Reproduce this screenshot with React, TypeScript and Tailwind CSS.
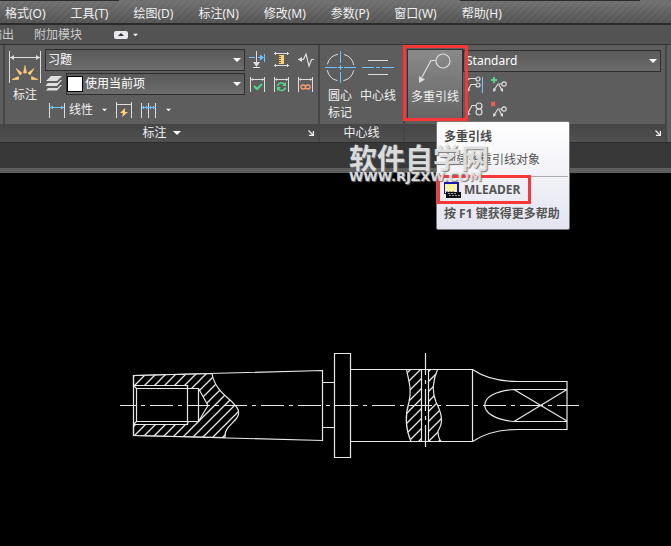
import React from 'react';
import { clsx } from 'clsx';

const MENUS = ['格式(O)', '工具(T)', '绘图(D)', '标注(N)', '修改(M)', '参数(P)', '窗口(W)', '帮助(H)'];

const Caret = ({ className }: { className?: string }) => (
  <svg width="8" height="4" viewBox="0 0 8 4" className={clsx('shrink-0 fill-white', className)} aria-hidden="true">
    <path d="M0 0h8L4 4z" />
  </svg>
);

const Launcher = () => (
  <button aria-label="展开" className="ml-auto">
    <svg width="6" height="6" viewBox="0 0 6 6" fill="none" stroke="#eee" strokeWidth="1.2">
      <path d="M.5.5 5 5M5.4 1v4.4H1" />
    </svg>
  </button>
);

const DimBox = ({ children }: { children: React.ReactNode }) => (
  <svg width="17" height="17" viewBox="0 0 17 17" fill="none">
    <path d="M1.5 1v15M15.5 1v15M2 3.5h13" stroke="#ddd" />
    <path d="M2 3.5l2-1.5v3zM15 3.5l-2-1.5v3z" fill="#ddd" />
    {children}
  </svg>
);

const SmallTools = () => (
  <div className="grid grid-cols-3 gap-x-[7px] gap-y-2">
    <button aria-label="标注打断">
      <svg width="17" height="17" viewBox="0 0 17 17" fill="none">
        <path d="M7.5 0v13M4 16.5h7" stroke="#ddd" />
        <path d="M4 11h7l-3.5 5z" fill="#ddd" />
        <path d="M0 6.5h6M9 6.5h4M15.5 3v8" stroke="#6cc5ff" />
        <path d="M11 3.5l4 3-4 3z" fill="#6cc5ff" />
      </svg>
    </button>
    <button aria-label="调整间距">
      <svg width="17" height="17" viewBox="0 0 17 17" fill="none">
        <path d="M1 2.5h15M1 14.5h15M2.5 1v3M14.5 1v3M2.5 13v3M14.5 13v3" stroke="#ddd" />
        <path d="M6 4h5v9H6z" fill="#ffd27a" />
        <path d="M6 5.5h2M6 7.5h2M6 9.5h2M6 11.5h2" stroke="#6b5a36" />
      </svg>
    </button>
    <button aria-label="折弯标注">
      <svg width="17" height="17" viewBox="0 0 17 17" fill="none">
        <path d="M1 8.500h5.500L9 3l3 12 2.500-6.500H17" stroke="#ddd" strokeWidth="1.200" />
        <path d="M1 8.500 5 6v5z" fill="#ddd" />
      </svg>
    </button>
    <button aria-label="检验">
      <DimBox><path d="m5 10 3 3 5-5" stroke="#57d68a" strokeWidth="2" /></DimBox>
    </button>
    <button aria-label="更新">
      <DimBox>
        <path d="M4.500 10a4 4 0 0 1 7-1.500M12.500 11.500a4 4 0 0 1-7 1.500" stroke="#57d68a" strokeWidth="1.600" />
        <path d="M13 6v4H9zM4 15v-4h4z" fill="#57d68a" />
      </DimBox>
    </button>
    <button aria-label="重新关联">
      <DimBox>
        <ellipse cx="6.200" cy="11" rx="2.300" ry="2" stroke="#ff9b6e" strokeWidth="1.300" />
        <ellipse cx="10.800" cy="11" rx="2.300" ry="2" stroke="#ff9b6e" strokeWidth="1.300" />
      </DimBox>
    </button>
  </div>
);

const Leaders = () => (
  <div className="ml-1 grid w-10 grid-cols-2 gap-x-2 gap-y-2">
    <button aria-label="对齐">
      <svg width="16" height="17" viewBox="0 0 16 17" fill="none" stroke="#ddd" strokeWidth="1.200">
        <path d="M0 4 3 2.500h6M1 14l3-5.500h5" />
        <circle cx="11" cy="3" r="2" /><circle cx="11" cy="9" r="2" />
        <path d="m0 16 .5-4 3 2z" fill="#ddd" stroke="none" />
        <path d="M15.500 1v16" stroke="#6cc5ff" />
      </svg>
    </button>
    <button aria-label="添加引线">
      <svg width="16" height="17" viewBox="0 0 16 17" fill="none" stroke="#ddd" strokeWidth="1.200">
        <path d="M3 14 7 8h4M8 9l3 5" /><circle cx="13" cy="8" r="2.200" />
        <path d="m2 16 .5-4 3 2zM12 16l-3-2 3-2z" fill="#ddd" stroke="none" />
        <path d="M3 1v6M0 4h6" stroke="#57d68a" strokeWidth="2" />
      </svg>
    </button>
    <button aria-label="合并">
      <svg width="16" height="17" viewBox="0 0 16 17" fill="none" stroke="#ddd" strokeWidth="1.200">
        <path d="M1 12 5 4.500h4" />
        <circle cx="12" cy="5" r="3" /><circle cx="12" cy="11" r="3" />
        <path d="m0 15 .5-4 3 2z" fill="#ddd" stroke="none" />
      </svg>
    </button>
    <button aria-label="删除引线">
      <svg width="16" height="17" viewBox="0 0 16 17" fill="none" stroke="#ddd" strokeWidth="1.200">
        <path d="M3 14 7 8h4M8 9l3 5" /><circle cx="13" cy="8" r="2.200" />
        <path d="m2 16 .5-4 3 2zM12 16l-3-2 3-2z" fill="#ddd" stroke="none" />
        <path d="m0 1 4 4M4 1 0 5" stroke="#ff5a5a" strokeWidth="1.800" />
      </svg>
    </button>
  </div>
);

type SelectProps = { label: string; value: string; swatch?: boolean };

const Select = ({ label, value, swatch }: SelectProps) => (
  <div className="relative flex h-[22px] w-full items-center border border-[#2e2e2e] bg-linear-to-b from-[#5a5a5a] to-[#6c6c6c]">
    {swatch && <span className="size-4 shrink-0 border border-black bg-white" />}
    <select aria-label={label} className="h-full w-full appearance-none bg-transparent pl-[2px] text-white outline-none">
      <option>{value}</option>
    </select>
    <Caret className="pointer-events-none absolute right-[3px]" />
  </div>
);

type PanelProps = { title?: string; caret?: boolean; launcher?: boolean; className?: string; children?: React.ReactNode };

const Panel = ({ title, caret, launcher, className, children }: PanelProps) => (
  <section className={clsx('flex flex-col border-r-2 border-[#464646]', className)}>
    <div className="flex h-[79px] px-1 pt-1">{children}</div>
    <div className="grid h-[18px] grid-cols-[1fr_auto_1fr] items-center bg-linear-to-b from-[#454545] to-[#505050] px-1">
      <span className="col-start-2 flex items-center gap-1.5">
        {title}
        {caret && <Caret />}
      </span>
      {launcher && <span className="flex"><Launcher /></span>}
    </div>
  </section>
);

const Ribbon = () => (
  <div className="flex h-[98px] border-b border-[#2c2c2c] bg-[#5d5d5d]">
    <Panel className="w-[5px] shrink-0" />
    <Panel title="标注" caret launcher className="w-[315px] shrink-0">
      <button className="-ml-[2px] mr-[2px] flex w-9 shrink-0 flex-col items-center">
        <svg width="34" height="36" viewBox="0 0 34 36" fill="none">
          <path d="M1.500 2v32M32.500 2v32M2 8.500h30" stroke="#ddd" />
          <path d="m2 8.500 4-2.500v5zM32 8.500 28 6v5z" fill="#ddd" />
          <path
            d="M17 16.500 18.500 24h-3zM8 19.500l6 4.500-2 2zM26 19.500 20 24l2 2zM4 30.500l6.500-3v3zM30 30.500l-6.500-3v3z"
            fill="#ffd27a"
            stroke="#ffd27a"
            strokeWidth=".600"
          />
        </svg>
        <span className="pt-px">标注</span>
      </button>
      <div className="flex w-[200px] shrink-0 flex-col gap-[2px]">
        <Select label="标注样式" value="习题" />
        <div className="flex items-center gap-1 pl-px">
          <svg width="16" height="16" viewBox="0 0 16 16" className="shrink-0" fill="#ddd">
            <path d="M5 0h11l-5 5H0zM0 9l2-2h9.500L14.500 4H16l-5 6H0zM0 14.500l2-2.500h9.500l3-3H16l-5 5.500z" />
          </svg>
          <Select label="标注图层" value="使用当前项" swatch />
        </div>
        <div className="flex items-center gap-[9px] pl-1 pt-1">
          <button className="flex items-center gap-1">
            <svg width="16" height="15" viewBox="0 0 16 15" fill="none">
              <path d="M.5 0v15M15.500 0v15" stroke="#ddd" />
              <path d="M1 4.500h14" stroke="#6cc5ff" />
              <path d="m1 4.500 3-2v4zM15 4.500l-3-2v4z" fill="#6cc5ff" />
            </svg>
            线性
          </button>
          <Caret className="w-[5px]" />
          <button aria-label="快速标注">
            <svg width="16" height="16" viewBox="0 0 16 16" fill="none">
              <path d="M.5 0v16M15.500 0v16M1 2.500h14" stroke="#ddd" />
              <path d="M9 6 4 11h3l-1 4 6-5H9z" fill="#ffd27a" />
            </svg>
          </button>
          <button aria-label="连续标注">
            <svg width="16" height="15" viewBox="0 0 16 15" fill="none">
              <path d="M.5 0v15M7.500 0v15M14.500 0v15" stroke="#ddd" />
              <path d="M1 4.500h14" stroke="#6cc5ff" />
              <path d="m1 4.500 2-2v4zM7 4.500l-2-2v4zM8 4.500l2-2v4zM14 4.500l-2-2v4z" fill="#6cc5ff" />
            </svg>
          </button>
          <Caret className="w-[5px]" />
        </div>
      </div>
      <div className="ml-1 mt-[2px]"><SmallTools /></div>
    </Panel>
    <Panel title="中心线" className="w-[85px] shrink-0">
      <button className="flex w-8 shrink-0 flex-col items-center leading-[17px]">
        <svg width="32" height="34" viewBox="0 0 32 34" fill="none">
          <circle cx="16.500" cy="18.500" r="13.500" stroke="#ddd" strokeDasharray="15.200 6" strokeDashoffset="-3" />
          <path d="M16.500 2v12M16.500 23v11M1 18.500h12M20 18.500h12M16.500 16v5M14 18.500h5" stroke="#6cc5ff" />
        </svg>
        <span className="pt-1">圆心<br />标记</span>
      </button>
      <button className="ml-1 flex shrink-0 flex-col items-center leading-[17px]">
        <svg width="32" height="34" viewBox="0 0 32 34" fill="none">
          <path d="M6 11.500h20M6 25.500h20" stroke="#ddd" />
          <path d="M0 18.500h12M14 18.500h4M20 18.500h12" stroke="#6cc5ff" />
        </svg>
        <span className="pt-1">中心线</span>
      </button>
    </Panel>
    <Panel launcher className="min-w-[260px] flex-1">
      <button className="relative -ml-[2px] -mt-1 flex w-14 shrink-0 flex-col items-center pt-1 leading-[17px]">
        <span className="absolute -left-1 top-0 z-10 h-[76px] w-[65px] border-[3px] border-[#f93737]" />
        <span className="flex h-[72px] w-14 flex-col items-center border border-[#333] bg-linear-to-b from-[#8a8a8a] to-[#656565] pt-[2px]">
          <svg width="34" height="36" viewBox="0 0 34 36" fill="none" stroke="#ddd" strokeWidth="1.200">
            <circle cx="25" cy="9" r="7" /><path d="M18 8.500h-5L4 25" />
            <path d="M1 31V24l6 3.500z" fill="#ddd" stroke="none" />
          </svg>
          <span className="whitespace-nowrap">多重引线</span>
        </span>
      </button>
      <div className="flex flex-1 flex-col gap-1 pt-px">
        <Select label="多重引线样式" value="Standard" />
        <Leaders />
      </div>
    </Panel>
    <div className="w-1" />
  </div>
);

const Tooltip = () => (
  <div role="tooltip" className="absolute left-[436px] top-[121px] w-[134px] rounded-[2px] border border-[#777] bg-linear-to-b from-white to-[#e4e4f0] pb-1.5 text-[#555]">
    <p className="px-[7px] pt-1.5 font-bold leading-[18px] text-[#4a4a4a]">多重引线</p>
    <p className="px-[7px] pb-[7px] pt-[5px] leading-[18px]">创建多重引线对象</p>
    <div className="mx-px border-t border-[#aaa]" />
    <div className="-mt-[2px] flex h-[29px] w-[94px] items-center gap-[3px] border-[3px] border-[#f93737] pl-1">
      <svg width="17" height="16" viewBox="0 0 17 16" className="shrink-0">
        <path d="M0 0h15v12H0z" fill="#1717b0" />
        <path d="M1 2h12v9H1z" fill="#f8f4a0" />
        <path d="M2 10h15v6H2z" fill="#111" />
        <path d="M2 9.500h9M4 11.500h9M5 13.500h11" stroke="#99a" strokeDasharray="2 1" />
      </svg>
      <b>MLEADER</b>
    </div>
    <p className="whitespace-nowrap px-[7px] pt-px font-bold leading-[18px]">按 F1 键获得更多帮助</p>
  </div>
);

const Watermark = () => (
  <div className="absolute left-[349px] top-[144px] text-[#ebebeb]/90 [text-shadow:1px_1px_1px_#777]">
    <p className="text-[28px] font-bold leading-[28px]">软件自学网</p>
    <p className="whitespace-nowrap font-['DejaVu_Sans'] text-[13px] font-bold leading-[10px]">WWW.RJZXW.COM</p>
  </div>
);

const Shaft = () => (
  <svg width="671" height="373" viewBox="0 173 671 373" fill="none" stroke="#e8e8e8" strokeWidth="1.200">
    <defs>
      <pattern id="hatch" width="10" height="10" patternUnits="userSpaceOnUse">
        <path d="M-1 11 11-1M-1 1 1-1M9 11l2-2" stroke="#e8e8e8" strokeWidth="1.300" />
      </pattern>
    </defs>

    {/* tapered shank */}
    <path d="M133.500 375.500 322.500 370.500v70L133.500 435.500z" />
    <path d="M133.500 375.500 212 373.500C214 386 222 393 230 400C239 408 241 413 236 419C231 425 224 429 225 437.500L133.500 435.500V424.500H187.500V421.500H198.500L208 405.500 198.500 388.500H187.500V385.500H133.500z" fill="url(#hatch)" />
    <path d="M133.500 385.500h54v39h-54M136.500 388.500h62v33h-62zM133.500 385.500l3 3M133.500 424.500l3-3" />

    {/* collar and body */}
    <path d="M322.500 382.500h12M322.500 427.500h12M334.500 353.500h16v104h-16zM350.500 369.500h122v72h-122" />
    <path d="M406.500 369.500C409 382 412 390 409 402C405 415 405 428 411 441.500H421.500V369.500z" fill="url(#hatch)" />
    <path d="M437.500 369.500C433 380 431 390 436 402C443 416 443 423 438 431Q438 438 441 441.500H428.500V369.500z" fill="url(#hatch)" />

    {/* square end */}
    <path d="M472.500 369.500C485 378 500 381.500 518 381.500h49v48H518C500 429.500 485 433 472.500 441.500" />
    <path d="M567 389.500H514C475 392 475 418 514 421.500H567M514 389.500l53 31.500M514 421.500l53-32" />

    {/* centre lines */}
    <path d="M120 405.500h459" strokeDasharray="23 5 4 5" strokeDashoffset="7" />
    <path d="M425.500 353v96" strokeDasharray="22 5 4 5" />
  </svg>
);

const App = () => (
  <div className="relative flex min-h-screen flex-col overflow-hidden bg-black font-['Noto_Sans','Noto_Sans_CJK_SC',sans-serif] text-[12px] leading-[18px] text-[#f0f0f0]">
    <div className="flex h-px justify-between bg-[#707070]">
      <span className="w-[119px] bg-[#2b2b2b]" />
      <span className="mr-[31px] w-[180px] bg-[#2b2b2b]" />
    </div>
    <nav className="flex h-6 items-center gap-[25px] border-b-2 border-[#2b2b2b] bg-[repeating-linear-gradient(135deg,#ffffff0a_0_2px,#0000_2px_5px),linear-gradient(#707070,#535353)] pl-[5px] pt-1">
      {MENUS.map((menu) => (
        <button key={menu} className="shrink-0 whitespace-nowrap">{menu}</button>
      ))}
    </nav>
    <div className="flex h-5 items-center border-b border-[#333] bg-[#535353] text-[#ccc]">
      <button className="flex w-[14px] justify-end overflow-hidden whitespace-nowrap">输出</button>
      <button className="ml-5">附加模块</button>
      <button aria-label="最小化功能区" className="ml-8 flex h-2 w-[14px] items-center justify-center rounded-[2px] bg-[#e8e8ee]">
        <svg width="6" height="3" viewBox="0 0 6 3"><path d="M0 3h6L3 0z" fill="#333" /></svg>
      </button>
      <Caret className="ml-[5px] w-[5px]" />
    </div>
    <Ribbon />
    <div className="h-[30px] border-b-[5px] border-[#5e5e5e] bg-[#383838]" />
    <main className="flex-1"><Shaft /></main>
    <Tooltip />
    <Watermark />
  </div>
);

export default App;
